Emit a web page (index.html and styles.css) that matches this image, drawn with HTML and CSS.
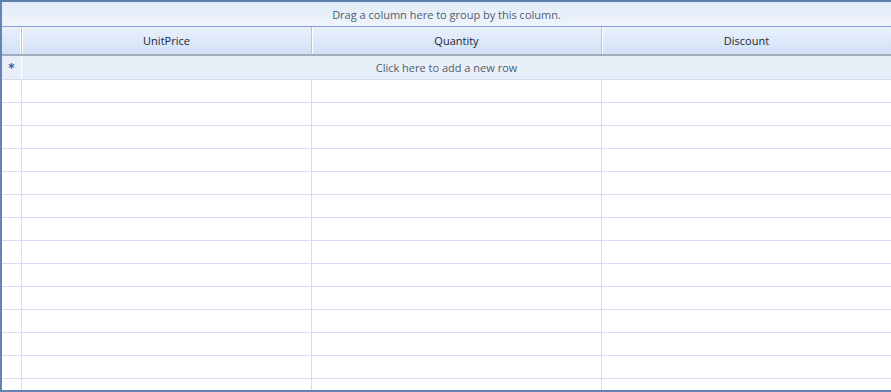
FILE: index.html
```html
<!DOCTYPE html>
<html>
<head>
<meta charset="utf-8">
<link rel="stylesheet" href="styles.css">
</head>
<body>
<div class="grid">
  <div class="group-panel">Drag a column here to group by this column.</div>
  <div class="header">
    <div class="ind"></div>
    <div class="hcell">UnitPrice</div>
    <div class="hcell">Quantity</div>
    <div class="hcell">Discount</div>
  </div>
  <div class="newrow">
    <div class="ind star">*</div>
    <div class="newtext">Click here to add a new row</div>
  </div>
  <div class="rows">
    <div class="row"><div class="ind"></div><div class="cell"></div><div class="cell"></div><div class="cell"></div></div>
    <div class="row"><div class="ind"></div><div class="cell"></div><div class="cell"></div><div class="cell"></div></div>
    <div class="row"><div class="ind"></div><div class="cell"></div><div class="cell"></div><div class="cell"></div></div>
    <div class="row"><div class="ind"></div><div class="cell"></div><div class="cell"></div><div class="cell"></div></div>
    <div class="row"><div class="ind"></div><div class="cell"></div><div class="cell"></div><div class="cell"></div></div>
    <div class="row"><div class="ind"></div><div class="cell"></div><div class="cell"></div><div class="cell"></div></div>
    <div class="row"><div class="ind"></div><div class="cell"></div><div class="cell"></div><div class="cell"></div></div>
    <div class="row"><div class="ind"></div><div class="cell"></div><div class="cell"></div><div class="cell"></div></div>
    <div class="row"><div class="ind"></div><div class="cell"></div><div class="cell"></div><div class="cell"></div></div>
    <div class="row"><div class="ind"></div><div class="cell"></div><div class="cell"></div><div class="cell"></div></div>
    <div class="row"><div class="ind"></div><div class="cell"></div><div class="cell"></div><div class="cell"></div></div>
    <div class="row"><div class="ind"></div><div class="cell"></div><div class="cell"></div><div class="cell"></div></div>
    <div class="row"><div class="ind"></div><div class="cell"></div><div class="cell"></div><div class="cell"></div></div>
    <div class="row"><div class="ind"></div><div class="cell"></div><div class="cell"></div><div class="cell"></div></div>
  </div>
</div>
</body>
</html>
```
FILE: styles.css
```css
html, body {
  margin: 0;
  padding: 0;
  background: #ffffff;
}
.grid {
  width: 889px;
  height: 388px;
  border-left: 2px solid #6384b4;
  border-top: 2px solid #5f80b0;
  border-bottom: 2px solid #6384b4;
  overflow: hidden;
  display: flex;
  flex-direction: column;
  font-family: "Open Sans", "DejaVu Sans", sans-serif;
  font-size: 11px;
}
.group-panel {
  height: 24px;
  flex: none;
  display: flex;
  align-items: center;
  justify-content: center;
  color: #4e5d6e;
  background: linear-gradient(#e2ebf8, #eff4fc);
  border-bottom: 1px solid #7ea2d2;
}
.header {
  height: 27px;
  flex: none;
  display: flex;
  border-bottom: 2px solid #a3adb9;
}
.header .ind {
  width: 19px;
  flex: none;
  background: linear-gradient(#e9f0fb, #d1e1f7);
  border-right: 1px solid #b8c4d2;
  box-shadow: inset -1px 0 0 #ffffff;
}
.hcell {
  width: 289px;
  flex: none;
  display: flex;
  align-items: center;
  justify-content: center;
  color: #1e2632;
  background: linear-gradient(#e9f0fb, #d1e1f7);
  border-right: 1px solid #b8c4d2;
  box-shadow: inset 1px 0 0 #ffffff;
}
.newrow {
  height: 23px;
  flex: none;
  display: flex;
  background: #e8eff9;
  border-bottom: 1px solid #d3dded;
}
.newrow .ind {
  width: 19px;
  flex: none;
  border-right: 1px solid #ffffff;
  display: flex;
  align-items: center;
  justify-content: center;
}
.star {
  color: #2a5aa8;
  font-family: "DejaVu Sans", sans-serif;
  font-weight: bold;
  font-size: 12px;
}
.newtext {
  flex: 1;
  display: flex;
  align-items: center;
  justify-content: center;
  padding-right: 20px;
  color: #4e5d6e;
}
.rows {
  flex: 1;
  overflow: hidden;
}
.row {
  height: 22px;
  display: flex;
  border-bottom: 1px solid #d3dff0;
}
.row .ind {
  width: 19px;
  flex: none;
  border-right: 1px solid #d3dff0;
}
.cell {
  width: 289px;
  flex: none;
  border-right: 1px solid #d3dff0;
}
```
